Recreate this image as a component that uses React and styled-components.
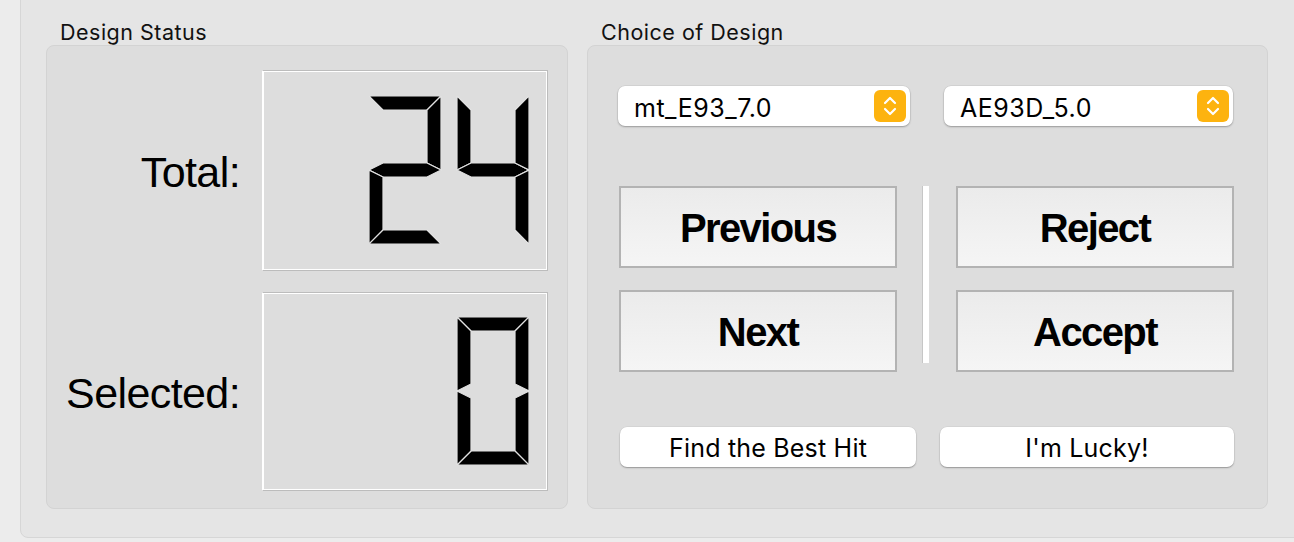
import React from "react";
import styled, { createGlobalStyle } from "styled-components";

const GlobalStyle = createGlobalStyle`
  html, body {
    margin: 0;
    padding: 0;
    background: #ececec;
    overflow: hidden;
  }
  body {
    font-family: "Liberation Sans", Arial, sans-serif;
    color: #000;
  }
`;

// seven segment geometry (Qt "filled" style)
const W = 72;
const H = 148;
const T = 14;
const M = H / 2;
const HT = T / 2;

const SEGMENTS = {
  a: [[0, 0], [W, 0], [W - T, T], [T, T]],
  b: [[W, 0], [W, M], [W - T, M - HT], [W - T, T]],
  c: [[W, M], [W, H], [W - T, H - T], [W - T, M + HT]],
  d: [[0, H], [T, H - T], [W - T, H - T], [W, H]],
  e: [[0, M], [T, M + HT], [T, H - T], [0, H]],
  f: [[0, 0], [T, T], [T, M - HT], [0, M]],
  g: [[0, M], [T, M - HT], [W - T, M - HT], [W, M], [W - T, M + HT], [T, M + HT]],
};

const DIGITS = {
  " ": "",
  0: "abcdef",
  1: "bc",
  2: "abged",
  3: "abgcd",
  4: "fgbc",
  5: "afgcd",
  6: "afgedc",
  7: "abc",
  8: "abcdefg",
  9: "abcdfg",
};

const PITCH = 88;

function Lcd({ value, digits = 2 }) {
  const text = String(value).padStart(digits, " ");
  const width = PITCH * (digits - 1) + W;
  return (
    <LcdFrame>
      <svg width={width} height={H} viewBox={`0 0 ${width} ${H}`}>
        {text.split("").map((ch, i) => (
          <g key={i} transform={`translate(${i * PITCH} 0)`}>
            {DIGITS[ch].split("").map((s) => (
              <polygon
                key={s}
                points={SEGMENTS[s].map((p) => p.join(",")).join(" ")}
                fill="#000"
                stroke="#e2e2e2"
                strokeWidth="1.2"
              />
            ))}
          </g>
        ))}
      </svg>
    </LcdFrame>
  );
}

function Stepper() {
  return (
    <StepperBox>
      <svg width="32" height="32" viewBox="0 0 32 32">
        <polyline points="11,13 16,8 21,13" fill="none" stroke="#fff" strokeWidth="2.2" strokeLinecap="round" strokeLinejoin="round" />
        <polyline points="11,19 16,24 21,19" fill="none" stroke="#fff" strokeWidth="2.2" strokeLinecap="round" strokeLinejoin="round" />
      </svg>
    </StepperBox>
  );
}

export default function App() {
  return (
    <>
      <GlobalStyle />
      <Window>
        <Group>
          <GroupTitle>Design Status</GroupTitle>
          <StatusBox>
            <StatusLabel>Total:</StatusLabel>
            <Lcd value={24} />
            <StatusLabel>Selected:</StatusLabel>
            <Lcd value={0} />
          </StatusBox>
        </Group>
        <Group>
          <GroupTitle>Choice of Design</GroupTitle>
          <ChoiceBox>
            <ComboRow>
              <Combo width={292}>
                <span>mt_E93_7.0</span>
                <Stepper />
              </Combo>
              <Combo width={289}>
                <span>AE93D_5.0</span>
                <Stepper />
              </Combo>
            </ComboRow>
            <ButtonGrid>
              <BigButton>Previous</BigButton>
              <Separator />
              <BigButton>Reject</BigButton>
              <BigButton>Next</BigButton>
              <BigButton>Accept</BigButton>
            </ButtonGrid>
            <PillRow>
              <PillButton width={296}>Find the Best Hit</PillButton>
              <PillButton width={294}>I'm Lucky!</PillButton>
            </PillRow>
          </ChoiceBox>
        </Group>
      </Window>
    </>
  );
}

const Window = styled.div`
  margin: -10px 0 0 20px;
  width: 1300px;
  box-sizing: border-box;
  background: #e5e5e5;
  border: 1px solid #d6d6d6;
  border-radius: 8px;
  padding: 29px 0 28px 25px;
  display: flex;
  gap: 19px;
`;

const Group = styled.div`
  display: flex;
  flex-direction: column;
`;

const GroupTitle = styled.div`
  font-family: Inter, "Liberation Sans", sans-serif;
  font-size: 21.5px;
  line-height: 24px;
  letter-spacing: 0.5px;
  padding-left: 14px;
  margin-bottom: 1px;
  color: #111;
`;

const Panel = styled.div`
  box-sizing: border-box;
  height: 464px;
  background: #dddddd;
  border: 1px solid #d3d3d3;
  border-radius: 8px;
`;

const StatusBox = styled(Panel)`
  width: 522px;
  display: grid;
  grid-template-columns: 1fr 286px;
  grid-template-rows: 201px 199px;
  column-gap: 22px;
  row-gap: 21px;
  align-items: center;
  align-content: start;
  padding: 24px 19px 0 0;
`;

const StatusLabel = styled.div`
  text-align: right;
  font-size: 43px;
  letter-spacing: -0.6px;
  line-height: 48px;
  margin-top: 2px;
`;

const LcdFrame = styled.div`
  box-sizing: border-box;
  height: 100%;
  display: flex;
  justify-content: flex-end;
  align-items: center;
  padding-right: 18px;
  border: 1px solid #bcbcbc;
  border-left-color: #fff;
  box-shadow: inset 1px 1px 0 #fff, inset -1px -1px 0 #fff;

  svg {
    display: block;
    margin-top: -1px;
  }
`;

const ChoiceBox = styled(Panel)`
  width: 681px;
  display: flex;
  flex-direction: column;
`;

const ComboRow = styled.div`
  display: flex;
  gap: 34px;
  padding-left: 30px;
  margin-top: 40px;
`;

const Combo = styled.div`
  box-sizing: border-box;
  width: ${(p) => p.width}px;
  height: 40px;
  background: #fff;
  border-radius: 7px;
  box-shadow: 0 1px 2px rgba(0, 0, 0, 0.28), 0 0 0 0.5px rgba(0, 0, 0, 0.08);
  display: flex;
  align-items: center;
  justify-content: space-between;
  padding: 0 4px 0 16px;
  font-family: Inter, "Liberation Sans", sans-serif;
  font-size: 25px;
  letter-spacing: 0.5px;

  span {
    padding-top: 3px;
  }
`;

const StepperBox = styled.div`
  width: 32px;
  height: 32px;
  border-radius: 6px;
  background: #fdb30f;

  svg {
    display: block;
  }
`;

const ButtonGrid = styled.div`
  display: grid;
  grid-template-columns: 278px 5px 278px;
  grid-template-rows: 82px 82px;
  column-gap: 27px;
  row-gap: 22px;
  padding-left: 31px;
  margin-top: 60px;
`;

const BigButton = styled.div`
  box-sizing: border-box;
  border: 2px solid #b3b3b3;
  background: linear-gradient(#ebebeb, #f5f5f5);
  display: flex;
  align-items: center;
  justify-content: center;
  font-weight: 700;
  font-size: 40px;
  letter-spacing: -1.6px;
  padding-top: 2px;
`;

const Separator = styled.div`
  grid-row: 1 / span 2;
  grid-column: 2;
  height: 177px;
  box-sizing: border-box;
  border-left: 1px solid #c6c6c6;
  background: #fff;
  margin-left: -2px;
`;

const PillRow = styled.div`
  display: flex;
  gap: 24px;
  padding-left: 32px;
  margin-top: 55px;
`;

const PillButton = styled.div`
  box-sizing: border-box;
  width: ${(p) => p.width}px;
  height: 40px;
  background: #fff;
  border-radius: 7px;
  box-shadow: 0 1px 1.5px rgba(0, 0, 0, 0.3), 0 0 0 0.5px rgba(0, 0, 0, 0.06);
  display: flex;
  align-items: center;
  justify-content: center;
  padding-top: 1px;
  font-family: Inter, "Liberation Sans", sans-serif;
  font-size: 25px;
  letter-spacing: 0.2px;
`;
